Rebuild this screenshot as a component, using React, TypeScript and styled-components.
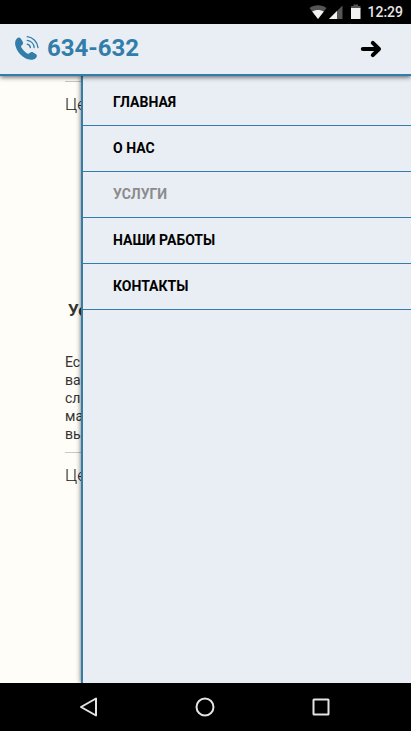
import React from 'react';
import styled, { createGlobalStyle } from 'styled-components';

const BLUE = '#327da9';
const PANEL = '#e9eef5';

const GlobalStyle = createGlobalStyle`
  *, *::before, *::after { box-sizing: border-box; }
  body { margin: 0; background: #000; font-family: Roboto, "Noto Sans", sans-serif; }
`;

const Screen = styled.div`
  display: flex;
  flex-direction: column;
  min-height: 100vh;
`;

const StatusBar = styled.div`
  display: flex;
  align-items: center;
  justify-content: flex-end;
  height: 24px;
  padding-right: 8px;
  background: #000;
  color: #e6e6e6;
  font-size: 14px;
  font-weight: 500;
  line-height: 26px;
`;

const StatusIcons = styled.svg`
  width: 54px;
  height: 24px;
  margin-right: 4px;
`;

const Header = styled.header`
  position: relative;
  z-index: 2;
  display: flex;
  align-items: center;
  justify-content: space-between;
  height: 52px;
  padding: 0 29px 2px 14px;
  background: ${PANEL};
  border-bottom: 2px solid ${BLUE};
  box-shadow: 0 1px 5px rgba(0, 0, 0, 0.65);
`;

const PhoneLink = styled.a`
  display: flex;
  align-items: center;
  gap: 7px;
  color: ${BLUE};
  font-size: 24px;
  font-weight: 700;
  line-height: 28px;
  text-decoration: none;
`;

const CloseButton = styled.button`
  display: flex;
  padding: 2px 0 0;
  border: 0;
  background: none;
  color: #000;
  cursor: pointer;
`;

const Main = styled.main`
  position: relative;
  flex: 1;
  overflow: hidden;
  background: #fffdf7;
`;

const Article = styled.article`
  padding: 5px 65px 0;
  color: #333;
`;

const Price = styled.p`
  margin: 0;
  padding-top: 11px;
  border-top: 1px solid #c9c7c3;
  color: #222;
  font-size: 17px;
  font-weight: 300;
  line-height: 22px;
`;

const Title = styled.h2`
  margin: 184px 0 0 3px;
  font-size: 17px;
  font-weight: 700;
  line-height: 22px;
`;

const Description = styled.p`
  margin: 32px 0 9px;
  font-size: 14px;
  font-weight: 400;
  line-height: 18px;
`;

const Drawer = styled.nav`
  position: absolute;
  top: 0;
  right: 0;
  bottom: 0;
  left: 81px;
  padding-top: 4px;
  background: ${PANEL};
  border-left: 2px solid ${BLUE};
  box-shadow: 0 0 5px rgba(0, 0, 0, 0.6);
`;

const Menu = styled.ul`
  margin: 0;
  padding: 0;
  list-style: none;
`;

const MenuLink = styled.a<{ $current?: boolean }>`
  display: block;
  padding: 0 30px;
  border-bottom: 1px solid ${BLUE};
  color: ${({ $current }) => ($current ? '#8b8b8b' : '#000')};
  font-size: 14px;
  font-weight: 700;
  line-height: 45px;
  text-decoration: none;
`;

const SystemBar = styled.div`
  display: flex;
  align-items: center;
  justify-content: center;
  gap: 92px;
  height: 48px;
  padding-right: 1px;
  background: #000;
`;

const SystemButton = styled.button`
  display: flex;
  padding: 0;
  border: 0;
  background: none;
  color: #e4e4e4;
`;

const items = ['ГЛАВНАЯ', 'О НАС', 'УСЛУГИ', 'НАШИ РАБОТЫ', 'КОНТАКТЫ'];

const PhoneIcon = () => (
  <svg width="26" height="26" viewBox="0 0 26 26" fill="none" aria-hidden="true">
    <path
      d="M2.7 3.7 C4.2 2.1 5.8 2.2 6.9 3.7 L8.6 6.4 C9.4 7.8 9.2 8.9 8.1 9.9 L7.5 10.5 C6.9 11.2 7 11.9 7.6 12.8 C9.1 15.1 10.9 17 13.2 18.4 C14.1 19 14.8 18.9 15.4 18.3 L16 17.7 C17 16.8 18 16.7 19.2 17.4 L21.7 19 C23.2 20.1 23.3 21.4 22.1 22.8 C20.4 24.7 18 25.2 15.4 24.6 C8.8 23.1 2.8 17 1.3 10.2 C.8 7.7 1.2 5.3 2.7 3.7Z"
      fill="currentColor"
    />
    <path
      d="M13.2 9.2 A4 4 0 0 1 16.4 12.6 M13.2 5.4 A8 8 0 0 1 20.2 12.6 M13.2 1.7 A12 12 0 0 1 24 12.6"
      stroke="currentColor"
      strokeWidth="1.3"
      strokeLinecap="round"
    />
  </svg>
);

export default function App() {
  return (
    <>
      <GlobalStyle />
      <Screen>
        <StatusBar>
          <StatusIcons viewBox="0 0 54 24" aria-hidden="true">
            <path d="M.5 8 C5 4.3 13 4.3 17.5 8 L9 19Z" fill="#555" />
            <path d="M3.2 11.6 C6.5 9.4 11.5 9.4 14.8 11.6 L9 19Z" fill="#f2f2f2" />
            <path d="M33.5 5.5 V19 H20Z" fill="#555" />
            <path d="M28 11 V19 H20Z" fill="#f2f2f2" />
            <path d="M42 6 H44.5 V4.5 H49 V6 H51.5 V9 H42Z" fill="#555" />
            <path d="M42 8 H51.5 V19 H42Z" fill="#f2f2f2" />
          </StatusIcons>
          <time>12:29</time>
        </StatusBar>
        <Header>
          <PhoneLink href="tel:634632">
            <PhoneIcon />
            634-632
          </PhoneLink>
          <CloseButton type="button" aria-label="Закрыть меню">
            <svg width="22" height="20" viewBox="0 0 22 20" fill="none" aria-hidden="true">
              <path d="M2.8 10 H18 M12.8 3.8 L19 10 L12.8 16.2" stroke="currentColor" strokeWidth="4" strokeLinecap="round" strokeLinejoin="round" />
            </svg>
          </CloseButton>
        </Header>
        <Main>
          <Article>
            <Price>Це</Price>
            <Title>Ус</Title>
            <Description>
              Ес<br />ва<br />сл<br />ма<br />вы
            </Description>
            <Price>Це</Price>
          </Article>
          <Drawer>
            <Menu>
              {items.map((item) => (
                <li key={item}>
                  <MenuLink href="#" $current={item === 'УСЛУГИ'}>{item}</MenuLink>
                </li>
              ))}
            </Menu>
          </Drawer>
        </Main>
        <SystemBar>
          <SystemButton type="button" aria-label="Назад">
            <svg width="24" height="24" viewBox="0 0 24 24" fill="none" aria-hidden="true">
              <path d="M19 3.5 V20.5 L4 12Z" stroke="currentColor" strokeWidth="2" strokeLinejoin="round" />
            </svg>
          </SystemButton>
          <SystemButton type="button" aria-label="Домой">
            <svg width="24" height="24" viewBox="0 0 24 24" fill="none" aria-hidden="true">
              <circle cx="12" cy="12" r="8.5" stroke="currentColor" strokeWidth="2" />
            </svg>
          </SystemButton>
          <SystemButton type="button" aria-label="Обзор">
            <svg width="24" height="24" viewBox="0 0 24 24" fill="none" aria-hidden="true">
              <rect x="4.5" y="4.5" width="15" height="15" rx=".5" stroke="currentColor" strokeWidth="2" />
            </svg>
          </SystemButton>
        </SystemBar>
      </Screen>
    </>
  );
}
